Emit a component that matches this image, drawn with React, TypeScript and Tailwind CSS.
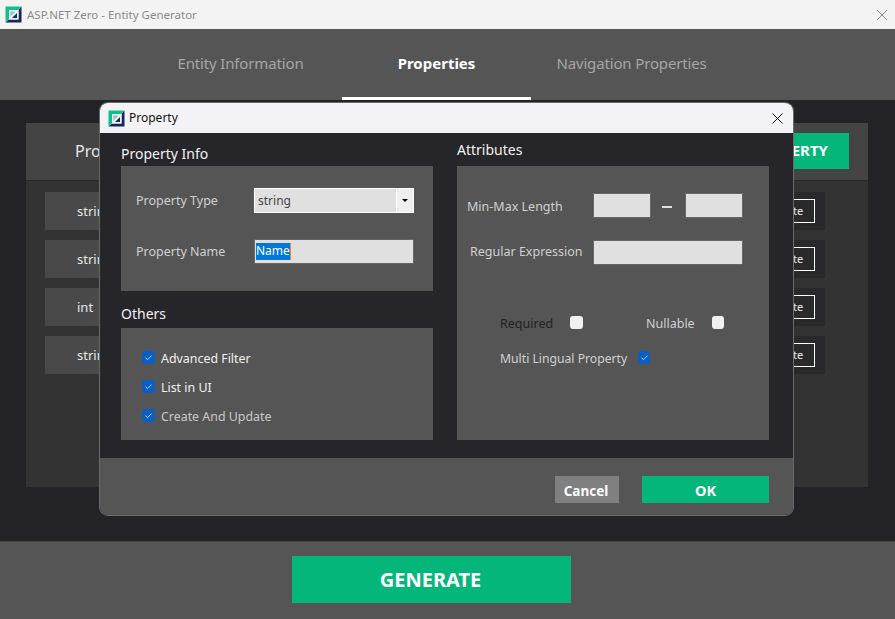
import React from "react";

const Logo = () => (
  <svg width="17" height="17" viewBox="0 0 17 17" className="shrink-0">
    <path d="M0.5 0.5H16.5L13 4H4V13L0.5 16.5Z" fill="#10c08c" />
    <path d="M16.5 0.5V16.5H0.5L4 13.5H13.5V4Z" fill="#14275a" />
    <path d="M4 4H13.5V13.5H4Z" fill="#f4f4f6" />
    <path d="M5.5 5.5H10.5L5.5 10.5Z" fill="#10c08c" opacity="0.6" />
    <path d="M12 7V12H7Z" fill="#14275a" />
  </svg>
);

const Check = ({ on = true, small = false }: { on?: boolean; small?: boolean }) => (
  <span
    className={`flex h-[13px] shrink-0 items-center justify-center rounded-[3px] ${small ? "w-[12px]" : "w-[13px]"} ${on ? "bg-[#0b5fc2]" : "bg-[#f0f0f0]"}`}
  >
    {on && (
      <svg width="9" height="9" viewBox="0 0 9 9" fill="none">
        <path d="M1.5 4.7L3.6 6.6L7.5 2.6" stroke="#d5e5fa" strokeWidth="0.9" />
      </svg>
    )}
  </span>
);

const Row = ({ label }: { label: string }) => (
  <div className="flex h-[38px] w-[780px]">
    <div className="flex h-full w-[400px] items-center bg-gradient-to-r from-[#484848] to-[#555] pl-8 pt-[2px] text-[13px] text-[#e6e6e6]">
      {label}
    </div>
    <div className="flex h-full flex-1 items-center justify-end bg-[#29292c] pr-[10px]">
      <span className="flex h-[24px] w-[60px] items-center justify-center border border-white pl-[3px] text-[11px] text-[#eee]">
        Delete
      </span>
    </div>
  </div>
);

const Field = ({ className }: { className: string }) => (
  <div className={`h-[25px] border border-[#666] bg-[#e0e0e0] ${className}`} />
);

export default function App() {
  return (
    <div className="relative flex h-[619px] w-[895px] flex-col overflow-hidden bg-[#232327] font-['Noto_Sans','Open_Sans',sans-serif]">
      <div className="flex h-[29px] shrink-0 items-center bg-[#f3f3f3] pl-[5px] text-[11.5px] text-[#8a8a8a]">
        <Logo />
        <span className="ml-[5px]">ASP.NET Zero - Entity Generator</span>
        <svg width="12" height="12" viewBox="0 0 12 12" className="ml-auto mr-[7px]" fill="none">
          <path d="M1 1L11 11M11 1L1 11" stroke="#8a8a8a" strokeWidth="1" />
        </svg>
      </div>

      <div className="flex h-[71px] shrink-0 bg-[#555] pl-[139px] text-[15px]">
        <div className="flex w-[203px] items-center justify-center pb-[3px] tracking-[-0.15px] text-[#a5a5a5]">Entity Information</div>
        <div className="flex w-[189px] items-center justify-center border-b-[3px] border-white font-bold text-white">
          Properties
        </div>
        <div className="flex w-[201px] items-center justify-center pb-[3px] tracking-[-0.15px] text-[#a5a5a5]">Navigation Properties</div>
      </div>

      <div className="flex-1 px-[26px] pt-[23px]">
        <div className="h-[364px] w-[842px] bg-[#333]">
          <div className="flex h-[58px] items-center justify-between border-b border-[#2a2a2a] bg-[#444] pb-[2px] pl-[49px] pr-[19px]">
            <span className="text-[16px] text-[#e8e8e8]">Property</span>
            <span className="flex h-[36px] w-[200px] items-center justify-end bg-[#05b67a] pr-[21px] text-[15px] font-bold text-white">
              ADD NEW PROPERTY
            </span>
          </div>
          <div className="flex flex-col gap-[10px] pl-[19px] pt-[11px]">
            <Row label="string" />
            <Row label="string" />
            <Row label="int" />
            <Row label="string" />
          </div>
        </div>
      </div>

      <div className="flex h-[78px] shrink-0 items-center justify-center border-t border-[#444] bg-[#555] pb-[2px] pr-[32px]">
        <div className="flex h-[47px] w-[279px] items-center justify-center bg-[#05b67a] pr-[2px] text-[20px] font-bold text-white">
          GENERATE
        </div>
      </div>

      <div className="absolute left-[100px] top-[103px] flex h-[412px] w-[693px] flex-col overflow-hidden rounded-[8px] shadow-[0_0_0_1px_#6a6a6a]">
        <div className="flex h-[30px] shrink-0 items-center bg-[#f3f3f7] pl-[8px] text-[12px] text-[#111]">
          <Logo />
          <span className="ml-[4px]">Property</span>
          <svg width="11" height="11" viewBox="0 0 11 11" className="ml-auto mr-[10px]" fill="none">
            <path d="M0.5 0.5L10.5 10.5M10.5 0.5L0.5 10.5" stroke="#111" strokeWidth="1" />
          </svg>
        </div>

        <div className="flex h-[325px] shrink-0 gap-[24px] bg-[#25252a] pl-[21px]">
          <div className="flex w-[312px] flex-col">
            <div className="flex h-[33px] shrink-0 items-end pb-[2px] text-[14px] leading-[20px] text-[#f2f2f2]">Property Info</div>
            <div className="h-[125px] shrink-0 bg-[#555] pl-[15px] pt-[22px] text-[12.5px] text-[#d0d0d0]">
              <div className="flex h-[25px] items-center">
                <span className="w-[118px] pt-[2px]">Property Type</span>
                <div className="flex h-[25px] w-[160px] border border-white bg-[#e0e0e0]">
                  <span className="flex flex-1 items-center pl-[3px] pt-[1px] text-[12px] text-[#444]">string</span>
                  <span className="flex w-[17px] items-center justify-center border-l border-white bg-[#efefef]">
                    <span className="h-0 w-0 border-x-[3px] border-t-[3px] border-x-transparent border-t-black" />
                  </span>
                </div>
              </div>
              <div className="mt-[26px] flex h-[25px] items-center">
                <span className="w-[118px] pt-[2px]">Property Name</span>
                <div className="flex h-[25px] w-[160px] items-center border border-[#666] bg-[#e0e0e0] pl-[1px]">
                  <span className="flex h-[17px] items-center border-r border-[#e8843a] bg-[#0078d7] pb-[2px] text-[12px] text-white">Name</span>
                </div>
              </div>
            </div>
            <div className="flex h-[37px] shrink-0 items-end pb-[4px] text-[14px] leading-[20px] text-[#f2f2f2]">Others</div>
            <div className="flex h-[112px] shrink-0 flex-col gap-[14px] bg-[#555] pl-[21px] pt-[22px] text-[12.4px] leading-[13px]">
              <div className="flex items-center gap-[6px] text-[#f0f0f0]"><Check /><span className="pt-[2px]">Advanced Filter</span></div>
              <div className="flex items-center gap-[6px] text-[#f0f0f0]"><Check /><span className="pt-[2px]">List in UI</span></div>
              <div className="flex items-center gap-[6px] text-[#c8c8c8]"><Check /><span className="pt-[2px]">Create And Update</span></div>
            </div>
          </div>

          <div className="flex w-[312px] flex-col">
            <div className="flex h-[33px] shrink-0 items-end pb-[6px] text-[14px] leading-[20px] text-[#f2f2f2]">Attributes</div>
            <div className="h-[274px] shrink-0 bg-[#555] text-[12.5px] text-[#d0d0d0]">
              <div className="mb-[22px] mt-[27px] flex h-[25px] items-center">
                <span className="ml-[10px] w-[126px] pt-[4px]">Min-Max Length</span>
                <Field className="w-[58px]" />
                <span className="ml-[11px] mr-[13px] mt-[3px] h-[2px] w-[10px] bg-[#e0e0e0]" />
                <Field className="w-[58px]" />
              </div>
              <div className="flex h-[25px] items-center">
                <span className="ml-[13px] w-[123px]">Regular Expression</span>
                <Field className="w-[150px]" />
              </div>
              <div className="mt-[51px] flex h-[13px] items-center pl-[43px]">
                <span className="w-[70px] pt-[4px] text-[#222]">Required</span>
                <Check on={false} />
                <span className="ml-[63px] w-[66px] pt-[4px]">Nullable</span>
                <Check on={false} small />
              </div>
              <div className="mt-[22px] flex h-[13px] items-center pl-[43px]">
                <span className="w-[138px] pt-[4px] text-[12.2px]">Multi Lingual Property</span>
                <Check small />
              </div>
            </div>
          </div>
        </div>

        <div className="flex flex-1 items-start justify-end gap-[23px] bg-[#555] pr-[24px] pt-[18px] text-[13px] font-bold text-white">
          <div className="flex h-[27px] w-[64px] items-center justify-center bg-[#808080] pr-[2px] pt-[3px] text-[13.5px]">Cancel</div>
          <div className="flex h-[27px] w-[127px] items-center justify-center bg-[#05b67a] pt-[3px] text-[14.5px]">OK</div>
        </div>
      </div>
    </div>
  );
}
